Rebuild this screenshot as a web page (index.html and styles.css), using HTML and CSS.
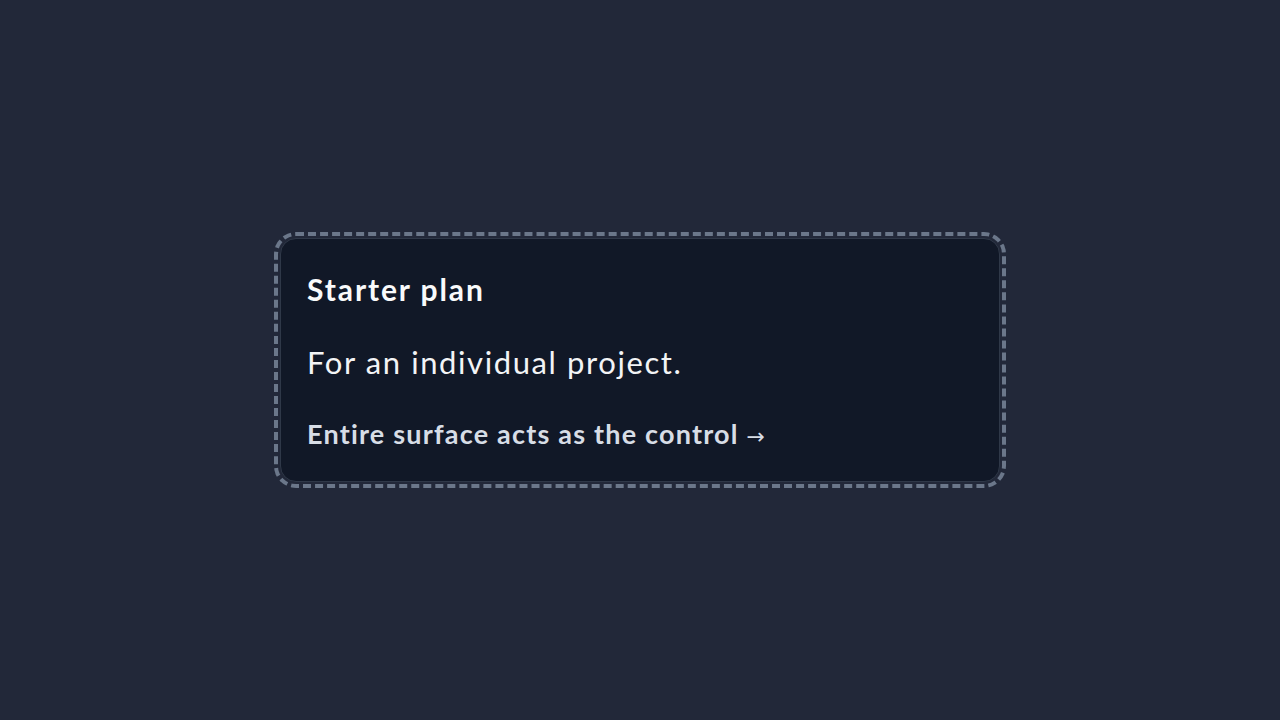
FILE: index.html
```html
<!DOCTYPE html>
<html lang="en">
<head>
  <meta charset="UTF-8">
  <meta name="viewport" content="width=device-width, initial-scale=1.0">
  <title>Starter plan</title>
  <link rel="stylesheet" href="styles.css">
</head>
<body>
  <a class="plan-card" href="#">
    <h2 class="plan-title">Starter plan</h2>
    <p class="plan-desc">For an individual project.</p>
    <span class="plan-cta">Entire surface acts as the control <span class="arrow">→</span></span>
  </a>
</body>
</html>
```
FILE: styles.css
```css
body {
  margin: 0;
  height: 100vh;
  background: #222839;
  display: flex;
  align-items: center;
  justify-content: center;
  font-family: 'Lato', sans-serif;
}

.plan-card {
  display: block;
  width: 720px;
  box-sizing: border-box;
  padding: 32px 26px 30px;
  background: #111827;
  border: 1px solid #2f3848;
  border-radius: 16px;
  outline: 4px dashed #6b778a;
  outline-offset: 2px;
  text-decoration: none;
  color: #f9fafb;
}

.plan-title {
  margin: 0;
  font-size: 30px;
  line-height: 1.2;
  font-weight: 700;
  letter-spacing: 1.9px;
}

.plan-desc {
  margin: 37px 0 0;
  font-size: 31px;
  line-height: 1.2;
  font-weight: 400;
  letter-spacing: 1.6px;
  color: #f3f4f6;
}

.plan-cta {
  display: block;
  margin-top: 37px;
  font-size: 27px;
  line-height: 1.2;
  font-weight: 700;
  letter-spacing: 1.2px;
  color: #d7dde6;
}

.arrow {
  font-family: 'DejaVu Sans', sans-serif;
  font-weight: 400;
  font-size: 22px;
}
```
